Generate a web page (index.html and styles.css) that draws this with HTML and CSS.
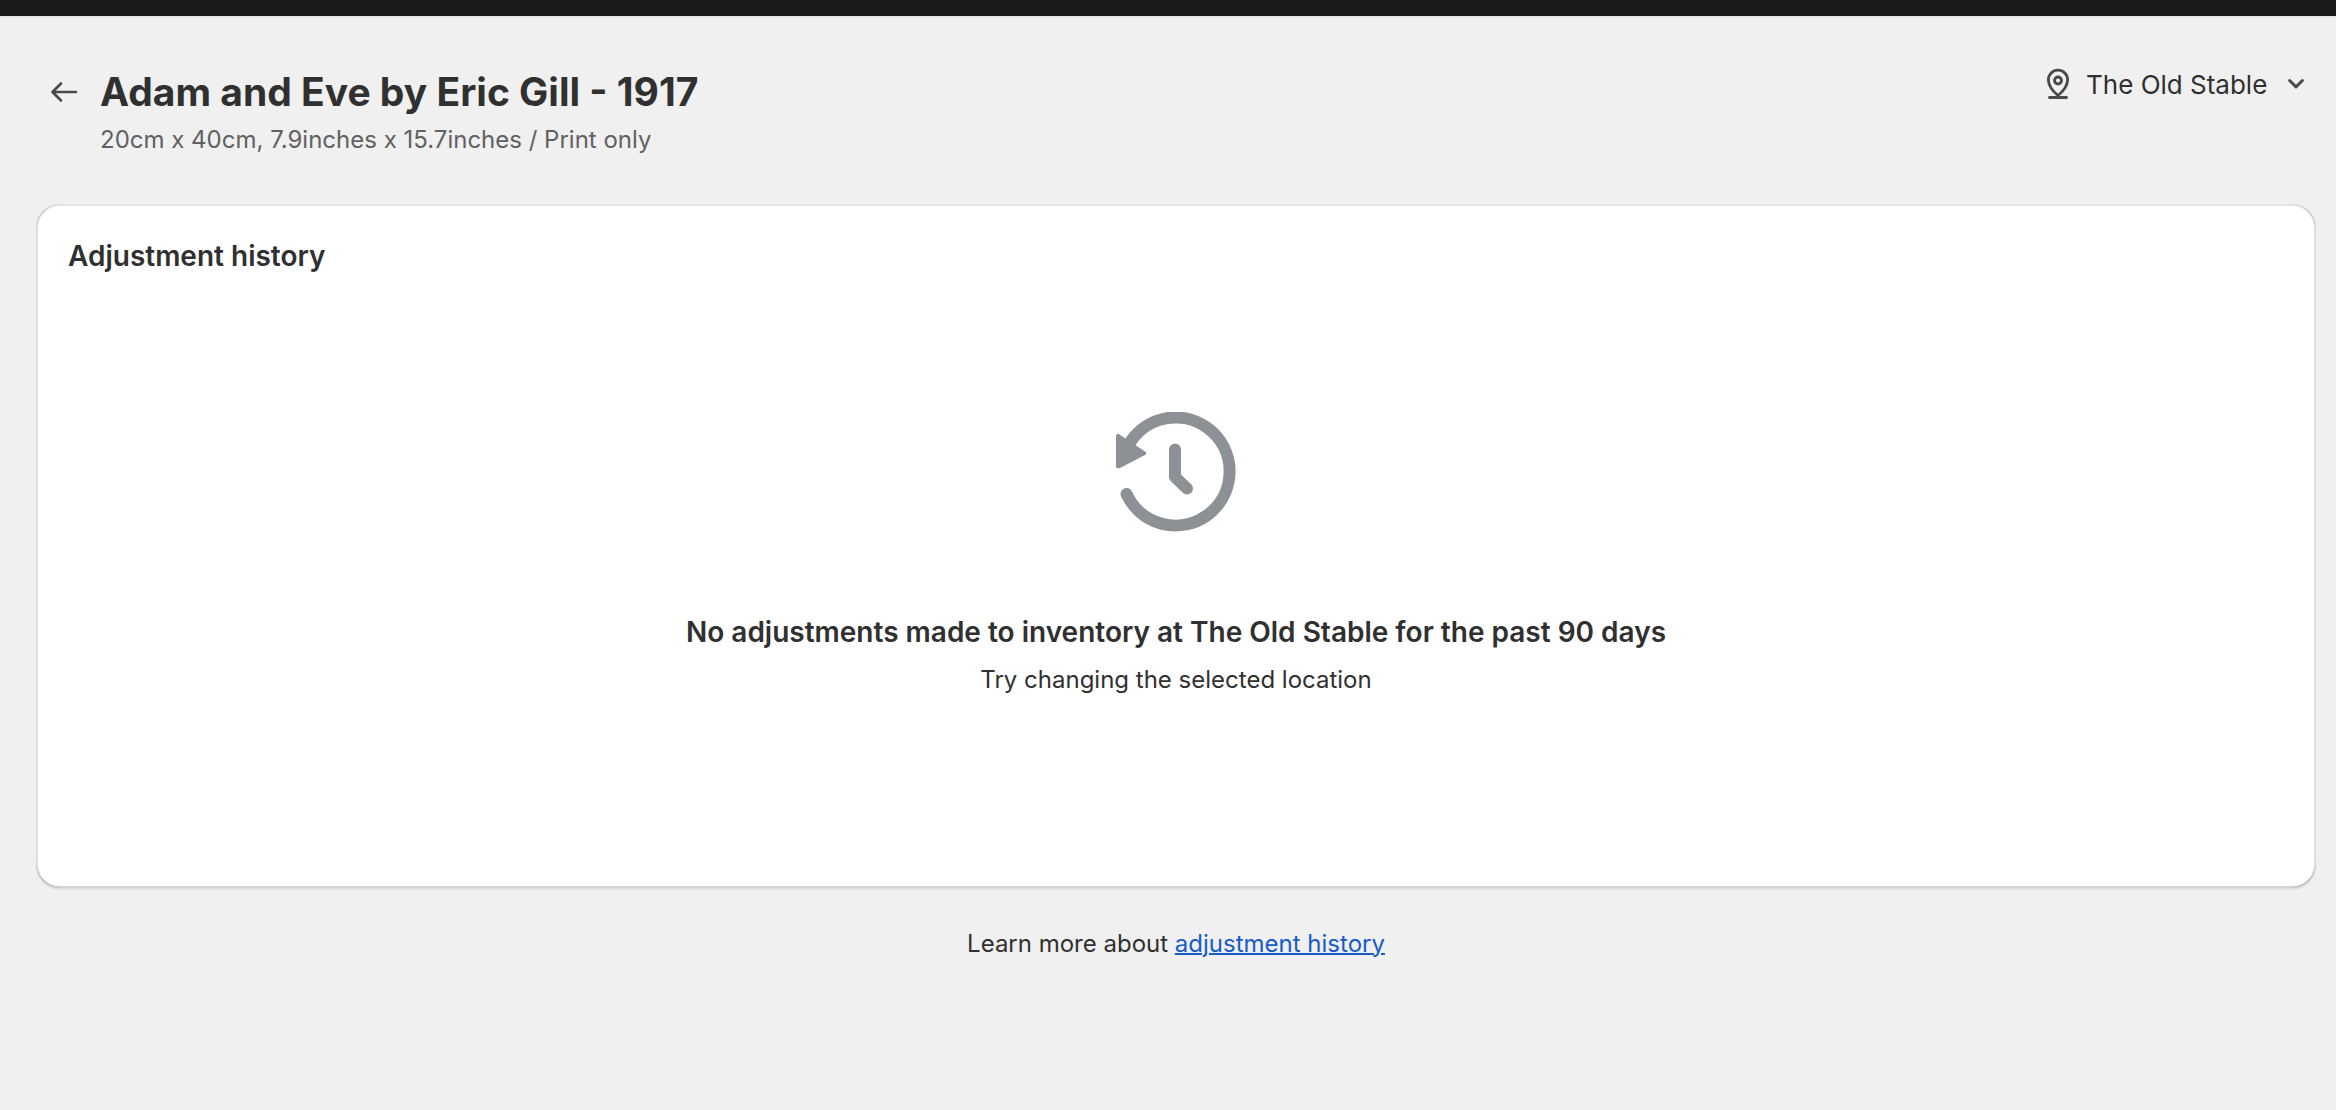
FILE: index.html
```html
<!DOCTYPE html>
<html lang="en">
<head>
<meta charset="UTF-8" />
<meta name="viewport" content="width=device-width, initial-scale=1" />
<title>Adjustment history</title>
<link rel="stylesheet" href="styles.css">
</head>
<body>
  <div class="topbar"></div>

  <main class="page">
    <header class="page-header">
      <button class="back-btn" type="button" aria-label="Back">
        <svg width="28" height="28" viewBox="0 0 28 28" aria-hidden="true">
          <path d="M26 14H3M11 5.5 2.5 14l8.500 8.500" fill="none" stroke="currentColor" stroke-width="2.600" stroke-linecap="round" stroke-linejoin="round"/>
        </svg>
      </button>
      <div class="page-title">
        <h1>Adam and Eve by Eric Gill - 1917</h1>
        <p>20cm x 40cm, 7.9inches x 15.7inches / Print only</p>
      </div>
      <div class="location">
        <svg width="24" height="32" viewBox="0 0 24 32" aria-hidden="true">
          <g fill="none" stroke="currentColor" stroke-width="2.800" stroke-linecap="round" stroke-linejoin="round">
            <path d="M12 27.500C7 23.500 2.400 18 2.400 11.800a9.600 9.600 0 0 1 19.200 0C21.600 18 17 23.500 12 27.500Z"/>
            <circle cx="12" cy="12.500" r="3.500"/>
            <path d="M3.500 29.500h17"/>
          </g>
        </svg>
        <select aria-label="Location">
          <option>The Old Stable</option>
        </select>
        <svg class="chevron" width="16" height="12" viewBox="0 0 16 12" aria-hidden="true">
          <path d="M1.600 2.500 8 8.900l6.400-6.400" fill="none" stroke="currentColor" stroke-width="3" stroke-linecap="round" stroke-linejoin="round"/>
        </svg>
      </div>
    </header>

    <section class="card">
      <h2>Adjustment history</h2>
      <div class="empty-state">
        <svg class="history-icon" width="120" height="120" viewBox="0 0 120 120" aria-hidden="true">
          <g fill="none" stroke="currentColor" stroke-width="12" stroke-linecap="round" stroke-linejoin="round">
            <path d="M10.500 82A54 54 0 1 0 15 29"/>
            <path d="M59 37.500V65L71 76.500"/>
          </g>
          <path d="M0 24.500Q0 20.500 3.500 22.500L29 39.500Q31.500 41.500 29 43L4 56Q0 57.500 0 53.500Z" fill="currentColor"/>
        </svg>
        <h3>No adjustments made to inventory at The Old Stable for the past 90 days</h3>
        <p>Try changing the selected location</p>
      </div>
    </section>

    <p class="footer-help">Learn more about <a href="#">adjustment history</a></p>
  </main>
</body>
</html>
```
FILE: styles.css
```css
*, *::before, *::after {
  box-sizing: border-box;
}
body {
  margin: 0;
  background: #f0f0f0;
  color: #303030;
  font-family: Inter, sans-serif;
  font-size: 24px;
  line-height: 40px;
}
h1, h2, h3, p {
  margin: 0;
}
.topbar {
  height: 16px;
  background: #1a1a1a;
  box-shadow: 0 2px 0 #e6e6e6;
}
.page {
  padding: 52px 20px 40px 36px;
}

/* Header */
.page-header {
  display: flex;
  align-items: flex-start;
  margin-bottom: 44px;
}
.back-btn {
  display: flex;
  align-items: center;
  height: 48px;
  margin: 0 22px 0 14px;
  padding: 0;
  border: none;
  background: none;
  color: #4a4a4a;
  cursor: pointer;
}
.page-title {
  flex: 1;
}
.page-title h1 {
  margin-bottom: 4px;
  font-size: 39px;
  line-height: 48px;
  font-weight: 700;
}
.page-title p {
  color: #616161;
}
.location {
  display: flex;
  align-items: center;
  height: 32px;
  padding-right: 12px;
  color: #4a4a4a;
}
.location select {
  appearance: none;
  margin: 0 20px 0 16px;
  padding: 2px 0 0;
  border: none;
  background: none;
  color: #303030;
  font-family: inherit;
  font-size: 26px;
  line-height: 32px;
  cursor: pointer;
}

/* Card */
.card {
  padding: 32px 32px 188px;
  background: #fff;
  border-radius: 24px;
  box-shadow:
    0 2px 0 rgba(26, 26, 26, 0.07),
    inset 2px 0 0 rgba(0, 0, 0, 0.13),
    inset -2px 0 0 rgba(0, 0, 0, 0.13),
    inset 0 -2px 0 rgba(0, 0, 0, 0.17),
    inset 0 2px 0 rgba(204, 204, 204, 0.5);
}
.card h2,
.card h3 {
  font-size: 28px;
  font-weight: 600;
}
.empty-state {
  display: flex;
  flex-direction: column;
  align-items: center;
  padding-top: 136px;
  text-align: center;
}
.history-icon {
  margin-bottom: 80px;
  color: #8c9196;
}
.empty-state h3 {
  margin-bottom: 8px;
}

.footer-help {
  margin-top: 36px;
  text-align: center;
}
.footer-help a {
  color: #175bc8;
  text-decoration-thickness: 2px;
}
```
